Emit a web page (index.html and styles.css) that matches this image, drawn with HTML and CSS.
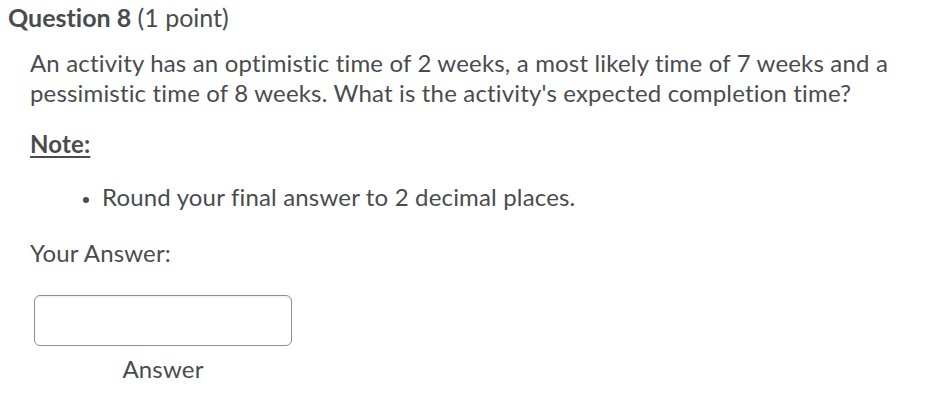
FILE: index.html
```html
<!DOCTYPE html>
<html>
<head>
<meta charset="utf-8">
<link rel="stylesheet" href="styles.css">
</head>
<body>
<div class="question">
  <h2 class="q-title"><strong>Question 8</strong> <span class="q-points">(1 point)</span></h2>
  <div class="q-body">
    <p class="q-text">An activity has an optimistic time of 2 weeks, a most likely time of 7 weeks and a pessimistic time of 8 weeks. What is the activity's expected completion time?</p>
    <p class="q-note"><u>Note:</u></p>
    <ul class="q-list">
      <li>Round your final answer to 2 decimal places.</li>
    </ul>
    <p class="q-answer-label">Your Answer:</p>
    <div class="answer-field">
      <input class="answer-input" type="text" aria-label="Answer">
      <span class="answer-caption">Answer</span>
    </div>
  </div>
</div>
</body>
</html>
```

FILE: styles.css
```css
html, body {
  margin: 0;
  padding: 0;
  background: #ffffff;
}
body {
  padding: 8px;
  font-family: Lato, "Open Sans", sans-serif;
  color: #494c4e;
  font-variant-ligatures: none;
}
.q-title {
  margin: 0;
  font-size: 25px;
  line-height: 19px;
  font-weight: 400;
  color: #494c4e;
}
.q-title strong {
  font-weight: 700;
}
.q-body {
  padding-left: 22px;
  font-size: 24px;
  line-height: 30px;
  letter-spacing: 0.17px;
}
.q-text {
  margin: 21px 0 0;
  width: 880px;
}
.q-note {
  margin: 21px 0 0;
  font-weight: 700;
}
.q-note u {
  text-decoration-thickness: 2px;
  text-underline-offset: 3px;
}
.q-list {
  margin: 23px 0 0;
  padding-left: 72px;
}
.q-list li::marker {
  font-size: 19px;
}
.q-answer-label {
  margin: 26px 0 0;
}
.answer-field {
  margin-top: 27px;
  width: 258px;
  margin-left: 4px;
  display: flex;
  flex-direction: column;
  align-items: center;
  gap: 8px;
}
.answer-input {
  box-sizing: border-box;
  width: 258px;
  height: 51px;
  margin: 0;
  border: 1px solid #8a8f92;
  border-radius: 6px;
  background: #fff;
  box-shadow: inset 0 2px 0 rgba(0,0,0,0.04);
  font: inherit;
}
.answer-caption {
  line-height: 30px;
}
```
